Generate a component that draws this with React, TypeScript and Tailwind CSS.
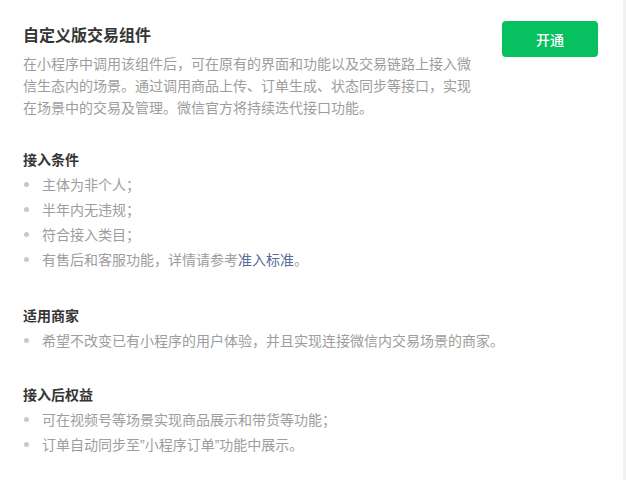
const font = { fontFamily: '"Noto Sans CJK SC", "Noto Sans", sans-serif' };

function Bullet({ children }: { children: React.ReactNode }) {
  return (
    <li className="flex items-center h-[25px] text-[14px] text-[#9d9d9d]">
      <span className="w-[5px] h-[5px] rounded-full bg-[#c8c8c8] ml-[1px] mr-[13px] shrink-0"></span>
      <span>{children}</span>
    </li>
  );
}

function Section({ title, children, className }: { title: string; children: React.ReactNode; className?: string }) {
  return (
    <div className={className}>
      <h3 className="h-[25px] leading-[25px] text-[14px] font-semibold text-[#353535]">{title}</h3>
      <ul>{children}</ul>
    </div>
  );
}

export default function App() {
  return (
    <div className="flex w-[626px] h-[480px] bg-white overflow-hidden" style={font}>
      <main className="w-[623px] pl-[23px] pr-[25px] pt-[22px]">
        <div className="flex justify-between items-start">
          <div className="w-[452px]">
            <h1 className="text-[16px] leading-[24px] font-semibold text-[#353535]">自定义版交易组件</h1>
            <p className="mt-[6px] text-[14px] leading-[22px] text-[#9d9d9d]">
              在小程序中调用该组件后，可在原有的界面和功能以及交易链路上接入微信生态内的场景。通过调用商品上传、订单生成、状态同步等接口，实现在场景中的交易及管理。微信官方将持续迭代接口功能。
            </p>
          </div>
          <button className="w-[96px] h-[36px] -mt-[1px] rounded-[4px] bg-[#07c160] text-white text-[14px] font-medium">
            开通
          </button>
        </div>

        <Section title="接入条件" className="mt-[29px]">
          <Bullet>主体为非个人；</Bullet>
          <Bullet>半年内无违规；</Bullet>
          <Bullet>符合接入类目；</Bullet>
          <Bullet>
            有售后和客服功能，详情请参考<span className="text-[#576b95]">准入标准</span>。
          </Bullet>
        </Section>

        <Section title="适用商家" className="mt-[31px]">
          <Bullet>希望不改变已有小程序的用户体验，并且实现连接微信内交易场景的商家。</Bullet>
        </Section>

        <Section title="接入后权益" className="mt-[29px]">
          <Bullet>可在视频号等场景实现商品展示和带货等功能；</Bullet>
          <Bullet>
            订单自动同步至<span className="font-['Liberation_Sans']">”</span>小程序订单
            <span className="font-['Liberation_Sans']">”</span>功能中展示。
          </Bullet>
        </Section>
      </main>
      <div className="flex-1 bg-[#f1f1f1]"></div>
    </div>
  );
}
